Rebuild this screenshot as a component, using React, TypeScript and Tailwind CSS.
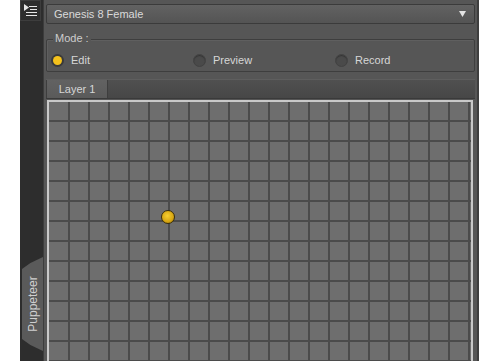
import React from "react";

const font = { fontFamily: '"Liberation Sans", Arial, sans-serif' };

function Radio({ on, label }: { on?: boolean; label: string }) {
  return (
    <div className="flex items-center gap-[7px]">
      <div
        className={
          on
            ? "w-[13px] h-[13px] rounded-full bg-[#3a3a3a] flex items-center justify-center"
            : "w-[13px] h-[13px] rounded-full bg-[#4a4a4a] border border-[#424242] shadow-[inset_0_1px_1px_rgba(0,0,0,0.3)]"
        }
      >
        {on && <div className="w-[9px] h-[9px] rounded-full bg-[#f5c21c]" />}
      </div>
      <span className="text-[11px] leading-none text-[#d6d6d6]">{label}</span>
    </div>
  );
}

function GridLines() {
  const w = 422;
  const h = 260;
  const vs: number[] = [];
  for (let x = 19; x < w; x += 20) vs.push(x);
  const hs: number[] = [];
  for (let y = 18; y < h; y += 20) hs.push(y);
  return (
    <svg width={w} height={h} className="absolute left-0 top-0">
      {vs.map((x) => (
        <rect key={"v" + x} x={x} y={0} width={2} height={h} fill="#4b4b4b" />
      ))}
      {hs.map((y) => (
        <rect key={"h" + y} x={0} y={y} width={w} height={2} fill="#4b4b4b" />
      ))}
    </svg>
  );
}

export default function App() {
  return (
    <div className="w-[500px] h-[361px] bg-white flex overflow-hidden" style={font}>
      <div className="w-[20px] shrink-0 bg-white" />
      {/* dark side strip */}
      <div className="w-[23px] shrink-0 bg-[#2d2d2d] flex flex-col">
        <div className="w-[21px] h-[21px] border border-[#3d3d3d] flex items-center justify-center">
          <svg width="13" height="14" viewBox="0 0 13 14">
            <polygon points="0,0 5,3.5 0,7" fill="#e6e6e6" />
            <rect x="5" y="2" width="8" height="1" fill="#e6e6e6" />
            <rect x="6" y="5" width="7" height="1" fill="#e6e6e6" />
            <rect x="2" y="8" width="11" height="1" fill="#e6e6e6" />
            <rect x="2" y="11" width="11" height="1" fill="#e6e6e6" />
          </svg>
        </div>
        <div className="mt-[236px] ml-[2px] w-[21px] h-[94px] bg-[#5a5a5a] relative [clip-path:polygon(0_12px,40%_6px,100%_0,100%_100%,40%_calc(100%-6px),0_calc(100%-12px))]">
          <span className="absolute left-1/2 top-1/2 -translate-x-1/2 -translate-y-1/2 -rotate-90 text-[12px] leading-none text-[#cfcfcf] whitespace-nowrap">
            Puppeteer
          </span>
        </div>
      </div>
      {/* main panel */}
      <div className="w-[436px] shrink-0 bg-[#565656] border-l border-[#3c3c3c] border-r-2 border-r-[#3e3e3e] flex flex-col">
        {/* dropdown */}
        <div className="mt-[4px] ml-[2px] w-[429px] h-[20px] rounded-[2px] border border-[#3b3b3b] bg-[linear-gradient(#626262,#545454)] flex items-center justify-between pl-[7px] pr-[8px]">
          <span className="text-[11px] leading-none text-[#dadada]">Genesis 8 Female</span>
          <svg width="7" height="6" viewBox="0 0 7 6">
            <polygon points="0,0 7,0 3.5,6" fill="#e4e4e4" />
          </svg>
        </div>
        {/* Mode group */}
        <div className="relative mt-[15px] ml-[2px] w-[429px] h-[33px] border border-[#3e3e3e] rounded-[2px] shadow-[inset_1px_1px_0_rgba(255,255,255,0.06)] grid grid-cols-[142px_142px_1fr] pl-[4px] pt-[10px]">
          <span className="absolute left-[6px] -top-[7px] px-[2px] bg-[#565656] text-[11px] leading-none text-[#cdcdcd]">
            Mode :
          </span>
          <Radio on label="Edit" />
          <Radio label="Preview" />
          <Radio label="Record" />
        </div>
        {/* tab bar */}
        <div className="mt-[7px] ml-[2px] w-[429px] h-[20px] flex bg-[linear-gradient(#505050,#474747)] border-t border-[#5e5e5e] border-b border-b-[#3a3a3a]">
          <div className="w-[62px] h-full bg-[linear-gradient(#626262,#5a5a5a)] border-l border-r border-[#3e3e3e] flex items-center justify-center">
            <span className="text-[11px] leading-none text-[#d6d6d6]">Layer 1</span>
          </div>
        </div>
        {/* grid canvas */}
        <div className="mt-[1px] ml-[3px] w-[426px] flex-1 border-2 border-b-0 border-[#c9c9c9] bg-[#6e6e6e] relative overflow-hidden">
          <GridLines />
          <div className="absolute left-[112px] top-[108px] w-[14px] h-[14px] rounded-full border border-[#3a2e08] bg-[radial-gradient(circle_at_45%_40%,#f6cf30,#d6a512_60%,#9a7308)]" />
        </div>
      </div>
      <div className="flex-1 bg-white" />
    </div>
  );
}
